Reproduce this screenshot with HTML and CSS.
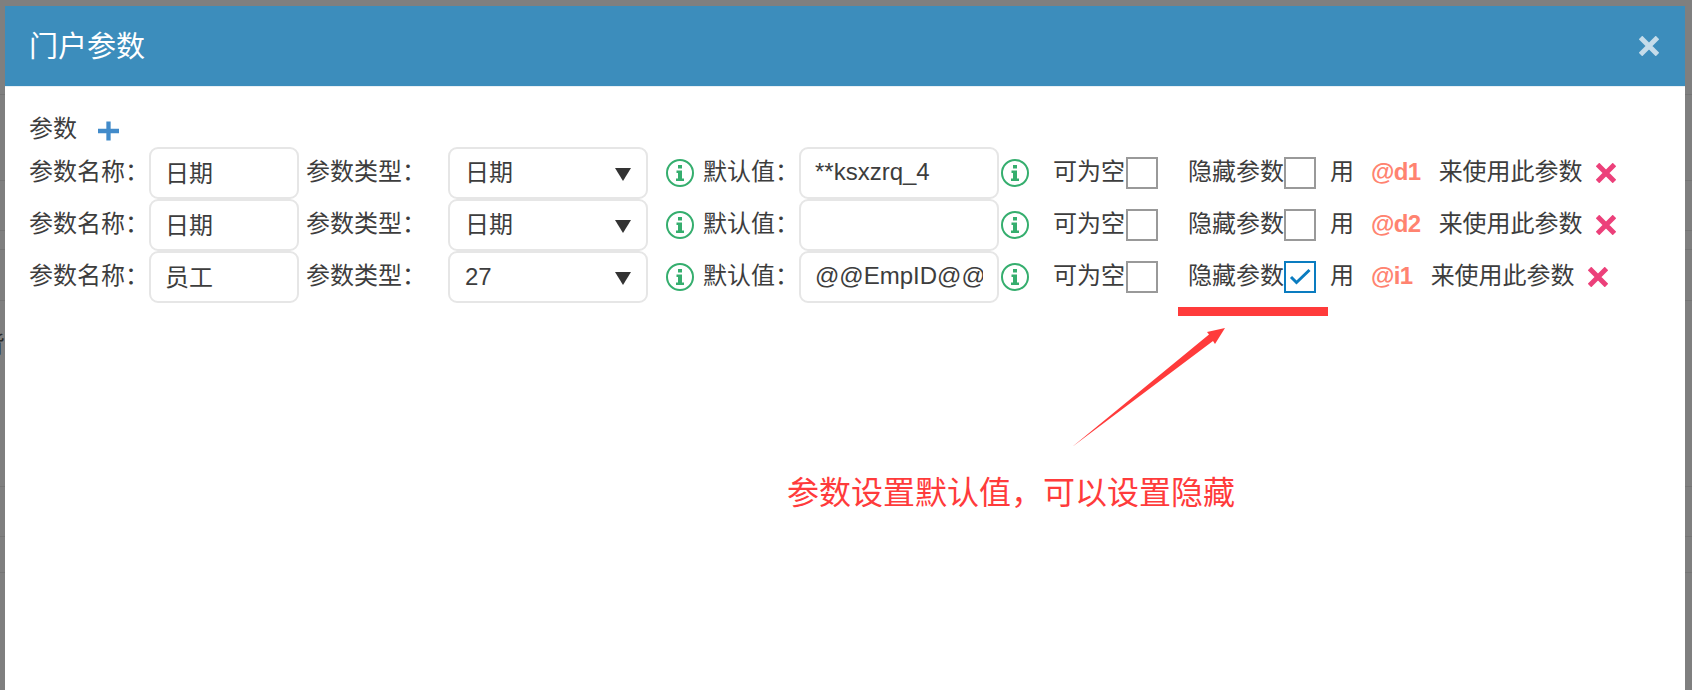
FILE: index.html
```html
<!DOCTYPE html>
<html>
<head>
  <title>门户参数</title>
  <link rel="stylesheet" href="styles.css">
</head>
<body>

  <!-- page behind the dimmed backdrop, only its edges show -->
  <div class="behind">
    <div class="behind-row" style="height: 95px"></div>
    <div class="behind-row" style="height: 86px"></div>
    <div class="behind-row" style="height: 50px"></div>
    <div class="behind-row" style="height: 19px"></div>
    <div class="behind-row" style="height: 51px"></div>
    <div class="behind-row behind-text" style="height: 186px">背</div>
    <div class="behind-row" style="height: 50px"></div>
    <div class="behind-row" style="height: 36px"></div>
  </div>

  <div class="modal">
    <div class="modal-header">
      <h3>门户参数</h3>
      <svg class="close" viewBox="0 0 20 20"><path d="M1.5 1.5L18.5 18.5M18.5 1.5L1.5 18.5"/></svg>
    </div>

    <div class="modal-body">
      <div class="params-title">
        <span>参数</span>
        <svg class="plus" viewBox="0 0 22 20"><path d="M11 0V20M0 10H22"/></svg>
      </div>

      <div class="row">
        <label class="lbl name-lbl">参数名称&#xFF1A;</label>
        <input class="field name-field" type="text" value="日期">
        <label class="lbl type-lbl">参数类型&#xFF1A;</label>
        <div class="select-wrap">
          <select class="field"><option>日期</option></select>
          <span class="caret"></span>
        </div>
        <svg class="info info-a" viewBox="0 0 28 28"><circle cx="14" cy="14" r="13"/><path d="M12 6H16V9.5H12ZM10.5 11.5H16V19.5H18V22H10V19.5H12V14H10.5Z"/></svg>
        <label class="lbl def-lbl">默认值&#xFF1A;</label>
        <input class="field def-field" type="text" value="**ksxzrq_4">
        <svg class="info info-b" viewBox="0 0 28 28"><circle cx="14" cy="14" r="13"/><path d="M12 6H16V9.5H12ZM10.5 11.5H16V19.5H18V22H10V19.5H12V14H10.5Z"/></svg>
        <label class="lbl null-lbl">可为空</label>
        <span class="check"></span>
        <label class="lbl hide-lbl">隐藏参数</label>
        <span class="check"></span>
        <span class="use">用</span>
        <span class="code">@d1</span>
        <span class="use-after">来使用此参数</span>
        <svg class="remove" viewBox="0 0 20 20"><path d="M1.5 1.5L18.5 18.5M18.5 1.5L1.5 18.5"/></svg>
      </div>

      <div class="row">
        <label class="lbl name-lbl">参数名称&#xFF1A;</label>
        <input class="field name-field" type="text" value="日期">
        <label class="lbl type-lbl">参数类型&#xFF1A;</label>
        <div class="select-wrap">
          <select class="field"><option>日期</option></select>
          <span class="caret"></span>
        </div>
        <svg class="info info-a" viewBox="0 0 28 28"><circle cx="14" cy="14" r="13"/><path d="M12 6H16V9.5H12ZM10.5 11.5H16V19.5H18V22H10V19.5H12V14H10.5Z"/></svg>
        <label class="lbl def-lbl">默认值&#xFF1A;</label>
        <input class="field def-field" type="text" value="">
        <svg class="info info-b" viewBox="0 0 28 28"><circle cx="14" cy="14" r="13"/><path d="M12 6H16V9.5H12ZM10.5 11.5H16V19.5H18V22H10V19.5H12V14H10.5Z"/></svg>
        <label class="lbl null-lbl">可为空</label>
        <span class="check"></span>
        <label class="lbl hide-lbl">隐藏参数</label>
        <span class="check"></span>
        <span class="use">用</span>
        <span class="code">@d2</span>
        <span class="use-after">来使用此参数</span>
        <svg class="remove" viewBox="0 0 20 20"><path d="M1.5 1.5L18.5 18.5M18.5 1.5L1.5 18.5"/></svg>
      </div>

      <div class="row">
        <label class="lbl name-lbl">参数名称&#xFF1A;</label>
        <input class="field name-field" type="text" value="员工">
        <label class="lbl type-lbl">参数类型&#xFF1A;</label>
        <div class="select-wrap">
          <select class="field"><option>27</option></select>
          <span class="caret"></span>
        </div>
        <svg class="info info-a" viewBox="0 0 28 28"><circle cx="14" cy="14" r="13"/><path d="M12 6H16V9.5H12ZM10.5 11.5H16V19.5H18V22H10V19.5H12V14H10.5Z"/></svg>
        <label class="lbl def-lbl">默认值&#xFF1A;</label>
        <input class="field def-field" type="text" value="@@EmpID@@">
        <svg class="info info-b" viewBox="0 0 28 28"><circle cx="14" cy="14" r="13"/><path d="M12 6H16V9.5H12ZM10.5 11.5H16V19.5H18V22H10V19.5H12V14H10.5Z"/></svg>
        <label class="lbl null-lbl">可为空</label>
        <span class="check"></span>
        <label class="lbl hide-lbl">隐藏参数</label>
        <span class="check checked"><svg viewBox="0 0 28 28"><path d="M5 14L10.5 19.5L23.5 7"/></svg></span>
        <span class="use">用</span>
        <span class="code">@i1</span>
        <span class="use-after">来使用此参数</span>
        <svg class="remove" viewBox="0 0 20 20"><path d="M1.5 1.5L18.5 18.5M18.5 1.5L1.5 18.5"/></svg>
      </div>
    </div>

    <!-- red annotation drawn on top of the screenshot -->
    <div class="mark-bar"></div>
    <svg class="mark-arrow" viewBox="0 0 160 125"><polygon points="0,120 137,7.5 135,5 153,1 143,17 141,14"/></svg>
    <div class="mark-text">参数设置默认值&#xFF0C;可以设置隐藏</div>
  </div>

</body>
</html>
```

FILE: styles.css
```css
* {
  box-sizing: border-box;
}

html, body {
  height: 100%;
}

body {
  margin: 0;
  background: #7f7f7f;
  overflow: hidden;
  font-family: "Liberation Sans", "Noto Sans CJK SC", sans-serif;
  font-size: 24px;
  color: #3d3d3d;
}

.behind-row {
  border-bottom: 1px solid #757575;
}

.behind-text {
  padding: 24px 0 0;
  margin-left: -19px;
  color: #2a2a2a;
  font-size: 24px;
}

/* Modal */
.modal {
  position: fixed;
  top: 6px;
  left: 5px;
  width: 1680px;
  bottom: 0;
  background: white;
}

.modal-header {
  display: flex;
  justify-content: space-between;
  align-items: center;
  height: 81px;
  padding: 0 26px 1px 24px;
  background: #3c8dbc;
  border-bottom: 1px solid #e8f0f5;
}

.modal-header h3 {
  margin: 0 0 3px;
  font-size: 29px;
  font-weight: normal;
  color: white;
}

.close {
  width: 20px;
  height: 20px;
  fill: none;
  stroke: #c5dcea;
  stroke-width: 5;
}

.modal-body {
  padding: 23px 24px 0;
}

.params-title {
  display: flex;
  align-items: center;
  height: 37px;
  line-height: 36px;
}

.plus {
  width: 21px;
  height: 20px;
  margin: 4px 0 0 21px;
  fill: none;
  stroke: #428bca;
  stroke-width: 4.5;
}

/* Parameter rows */
.row {
  display: flex;
  align-items: center;
  height: 52px;
}

.lbl {
  margin-bottom: 8px;
  white-space: nowrap;
}

.name-lbl { width: 120px; }
.type-lbl { width: 142px; margin-left: 7px; }
.def-lbl { width: 96px; margin-left: 9px; }
.null-lbl { width: 73px; margin-left: 24px; }
.hide-lbl { width: 96px; margin-left: 30px; }

.field {
  height: 52px;
  padding: 0 14px 2px;
  border: 2px solid #e6e6e6;
  border-radius: 9px;
  background: white;
  font: inherit;
  color: inherit;
  outline: none;
}

.name-field {
  width: 150px;
  padding-bottom: 4px;
}

.def-field { width: 200px; }

.select-wrap {
  position: relative;
  width: 200px;
  height: 52px;
}

.select-wrap select {
  width: 100%;
  padding-left: 15px;
  appearance: none;
}

.caret {
  position: absolute;
  top: 21px;
  right: 17px;
  border-left: 8px solid transparent;
  border-right: 8px solid transparent;
  border-top: 13px solid #333;
}

.info {
  flex: none;
  width: 28px;
  height: 28px;
  fill: #35ae6e;
}

.info circle {
  fill: none;
  stroke: #35ae6e;
  stroke-width: 2;
}

.info-a { margin-left: 18px; }
.info-b { margin-left: 2px; }

.check {
  flex: none;
  width: 32px;
  height: 32px;
  border: 2px solid #999;
}

.check.checked {
  border-color: #0a7cc0;
}

.check svg {
  display: block;
  width: 28px;
  height: 28px;
  fill: none;
  stroke: #0a7cc0;
  stroke-width: 3;
}

.use {
  margin-left: 14px;
  margin-bottom: 7px;
}

.code {
  margin-left: 17px;
  margin-bottom: 3px;
  font-size: 24px;
  font-weight: bold;
  letter-spacing: -0.6px;
  color: #ff8370;
}

.use-after {
  margin-left: 18px;
  margin-bottom: 7px;
}

.remove {
  flex: none;
  width: 20px;
  height: 20px;
  margin-left: 13px;
  fill: none;
  stroke: #ec407a;
  stroke-width: 5;
}

/* Annotation */
.mark-bar {
  position: absolute;
  top: 301px;
  left: 1173px;
  width: 150px;
  height: 9px;
  background: #ff3b3b;
}

.mark-arrow {
  position: absolute;
  top: 321px;
  left: 1067px;
  width: 160px;
  height: 125px;
  fill: #ff3b3b;
}

.mark-text {
  position: absolute;
  top: 464px;
  left: 782px;
  font-size: 32px;
  line-height: 46px;
  white-space: nowrap;
  color: #ff3b3b;
}
```
